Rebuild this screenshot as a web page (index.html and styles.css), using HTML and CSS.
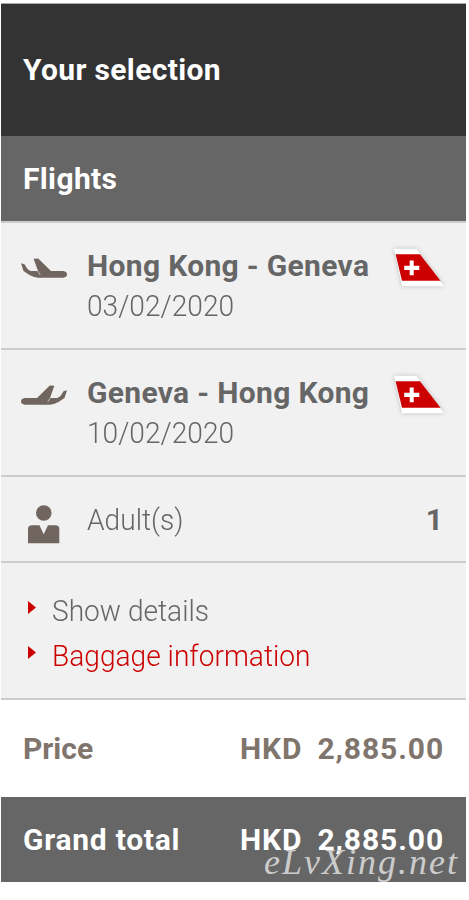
FILE: index.html
```html
<!DOCTYPE html>
<html lang="en">
<head>
<meta charset="utf-8">
<title>Your selection</title>
<link rel="stylesheet" href="styles.css">
</head>
<body>
<svg class="defs" width="0" height="0" aria-hidden="true">
  <symbol id="plane" viewBox="0 0 46 20">
    <path d="M0 5.3 3.5 6.3 6.5 11 9.5 13H17L12.6 .7 17.2 .4 30 13H42Q46 13.5 46 16.3 46 19.5 42 19.7H17Q12 19 8.5 17L2.5 13Z"/>
    <path class="wing-gap" d="M16.8 13 19.3 17"/>
  </symbol>
  <symbol id="tail" viewBox="0 0 56 46">
    <path class="tail-base" d="M3 2.7H25.5L53 40.3H11Z"/>
    <path class="tail-red" d="M4.6 8.3H29L49.5 34.7H11Z"/>
    <path class="tail-cross" d="M18.7 14.4h4v5.3h5.6v4.2h-5.6v5.4h-4v-5.4h-5.5v-4.2h5.5Z"/>
  </symbol>
</svg>
<main class="panel">
  <h1 class="title">Your selection</h1>
  <h2 class="section">Flights</h2>
  <section class="row flight">
    <svg class="plane"><use href="#plane"/></svg>
    <div class="info"><strong class="route">Hong Kong - Geneva</strong><span class="date">03/02/2020</span></div>
    <svg class="tail"><use href="#tail"/></svg>
  </section>
  <section class="row flight">
    <svg class="plane flipped"><use href="#plane"/></svg>
    <div class="info"><strong class="route">Geneva - Hong Kong</strong><span class="date">10/02/2020</span></div>
    <svg class="tail"><use href="#tail"/></svg>
  </section>
  <section class="row adults">
    <svg class="person" viewBox="0 0 32 39"><circle cx="15.8" cy="8" r="7.8"/><path d="M0 38.3V24Q0 20.3 4 20.3H11.5L15.7 29.3 20 20.3H27.5Q31.3 20.3 31.3 24V38.3Z"/></svg>
    <span class="adult-label">Adult(s)</span><strong class="count">1</strong>
  </section>
  <ul class="row links">
    <li><span class="link">Show details</span></li>
    <li class="red"><span class="link">Baggage information</span></li>
  </ul>
  <div class="sum price"><span>Price</span><span class="amount"><span>HKD</span><span>2,885.00</span></span></div>
  <div class="sum total"><span class="total-label">Grand total</span><span class="amount"><span>HKD</span><span>2,885.00</span></span></div>
  <span class="mark">eLvXing.net</span>
</main>
</body>
</html>
```
FILE: styles.css
```css
* { box-sizing: border-box; }
body { margin: 0; background: #fff; font: 30px/40px Roboto, "Liberation Sans", sans-serif; color: #666; }
.defs { display: block; }
.panel { position: relative; width: 465px; margin: 3px 0 0 1px; border-top: 1px solid #aaa; white-space: nowrap; }
h1, h2, ul { margin: 0; padding: 0; }
.title, .section { padding-left: 22px; font-size: 30px; font-weight: 700; color: #fff; letter-spacing: .35px; }
.title { height: 132px; background: #333; line-height: 132px; }
.section { height: 85px; background: #666; line-height: 85px; }
.row { background: #f1f1f1; border-top: 2px solid #ccc; }
.flight { display: flex; height: 127px; padding: 23px 19px 0 20px; }
.plane { width: 46px; height: 20px; margin: 12px 20px 0 0; fill: #70665f; }
.wing-gap { stroke: #f1f1f1; stroke-width: .6; fill: none; }
.flipped { transform: scaleX(-1); }
.info { display: flex; flex-direction: column; flex: 1; }
.route, .count { font-weight: 700; }
.route { letter-spacing: .33px; }
.date, .adult-label, .links { font-weight: 300; }
.date, .adult-label, .link { transform: scaleX(.937); transform-origin: left; }
.tail { width: 56px; height: 46px; filter: drop-shadow(0 0 2px #bbb); }
.tail-base, .tail-cross { fill: #fff; }
.tail-red { fill: #c00; }
.adults { display: flex; height: 86px; padding: 0 23px 0 27px; line-height: 86px; }
.person { width: 32px; height: 39px; margin: 28px 27px 0 0; fill: #70665f; }
.adult-label { flex: 1; }
.links { height: 137px; padding: 25px 0 0 27px; list-style: none; line-height: 45px; border-bottom: 0; }
.links li { display: flex; }
.links li::before { content: ""; width: 8px; height: 13px; margin: 13px 16px 0 0; background: #c00; clip-path: polygon(0 0, 100% 50%, 0 100%); }
.red { color: #c00; }
.sum { display: flex; justify-content: space-between; padding: 0 22px; font-weight: 700; }
.price { height: 99px; border-top: 2px solid #ccc; line-height: 97px; color: #80756d; }
.total { height: 85px; line-height: 85px; background: #666; color: #fff; }
.total-label { letter-spacing: .75px; }
.amount { display: flex; justify-content: space-between; width: 204px; letter-spacing: .9px; }
.mark { position: absolute; left: 263px; top: 834px; font: italic 36px/48px "Liberation Serif", serif; color: #ccc; letter-spacing: 2px; }
```
